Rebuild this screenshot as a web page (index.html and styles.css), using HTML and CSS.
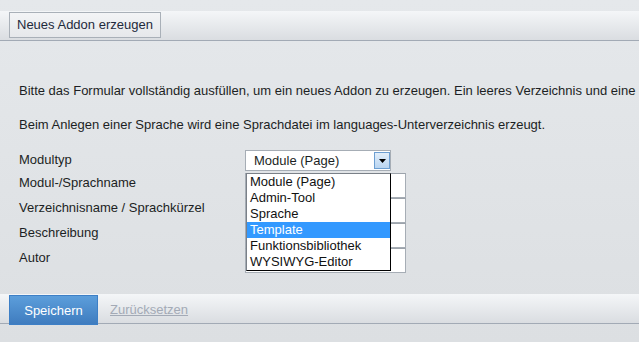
FILE: index.html
```html
<!DOCTYPE html>
<html lang="de">
<head>
  <meta charset="UTF-8">
  <title>Neues Addon erzeugen</title>
  <link rel="stylesheet" href="styles.css">
</head>
<body>

  <div class="bar top-bar">
    <span class="tab">Neues Addon erzeugen</span>
  </div>

  <div class="content">
    <p class="intro">Bitte das Formular vollständig ausfüllen, um ein neues Addon zu erzeugen. Ein leeres Verzeichnis und eine</p>
    <p class="intro">Beim Anlegen einer Sprache wird eine Sprachdatei im languages-Unterverzeichnis erzeugt.</p>

    <div class="form">
      <div class="row row-select">
        <label>Modultyp</label>
        <div class="select">
          <span class="select-value">Module (Page)</span>
          <span class="select-arrow">
            <svg width="7" height="4" viewBox="0 0 7 4"><path d="M0 0h7L3.5 4z" fill="#000"/></svg>
          </span>
          <ul class="select-list">
            <li>Module (Page)</li>
            <li>Admin-Tool</li>
            <li>Sprache</li>
            <li class="active">Template</li>
            <li>Funktionsbibliothek</li>
            <li>WYSIWYG-Editor</li>
          </ul>
        </div>
      </div>
      <div class="row">
        <label>Modul-/Sprachname</label>
        <input type="text">
      </div>
      <div class="row">
        <label>Verzeichnisname / Sprachkürzel</label>
        <input type="text">
      </div>
      <div class="row">
        <label>Beschreibung</label>
        <input type="text">
      </div>
      <div class="row">
        <label>Autor</label>
        <input type="text">
      </div>
    </div>
  </div>

  <div class="bar bottom-bar">
    <button class="save">Speichern</button>
    <a href="#" class="reset">Zurücksetzen</a>
  </div>

</body>
</html>
```

FILE: styles.css
```css
html, body { height: 100%; }
body {
  margin: 0;
  font-family: Arial, "Liberation Sans", sans-serif;
  font-size: 13px;
  color: #1c1f24;
  background: linear-gradient(#e5e8eb, #dcdfe2);
  overflow: hidden;
}

.bar {
  display: flex;
  align-items: flex-start;
  height: 29px;
  padding-left: 9px;
  background: linear-gradient(#f4f6f8, #dadde1);
  border-bottom: 1px solid #a2aab5;
}
.top-bar { margin-top: 11px; }
.tab {
  margin-top: 1px;
  height: 24px;
  line-height: 24px;
  padding: 0 7px;
  border: 1px solid #a9b0b8;
  background: linear-gradient(#f3f4f6, #e6e8eb);
  color: #1e2a3c;
}

.content { padding: 0 19px; }
.intro {
  margin: 0;
  white-space: nowrap;
  line-height: 16px;
}
.intro:first-child { margin-top: 42px; }
.intro + .intro { margin-top: 18px; }

.form { margin-top: 17px; }
.row { display: flex; height: 25px; }
.row-select { height: 23px; }
.row label {
  width: 226px;
  line-height: 16px;
  padding-top: 2px;
}
.row input {
  width: 161px;
  height: 25px;
  margin: 0;
  border: 1px solid #a6adb5;
  border-top-color: #9ca3ab;
  background: #fff;
  box-sizing: border-box;
}

.select {
  position: relative;
  width: 146px;
  height: 21px;
  border: 1px solid #a6adb5;
  background: #fff;
  box-sizing: border-box;
}
.select-value {
  display: block;
  padding-left: 8px;
  line-height: 19px;
}
.select-arrow {
  position: absolute;
  top: 1px;
  right: 0;
  width: 14px;
  height: 15px;
  border: 1px solid #6d9fd2;
  background: linear-gradient(#e2eefa, #b9d5f1);
  display: flex;
  align-items: center;
  justify-content: center;
}
.select-list {
  position: absolute;
  top: 22px;
  left: 0;
  width: 143px;
  margin: 0;
  padding: 0;
  list-style: none;
  background: #fff;
  border: 1px solid #000;
  border-top-color: #7a8088;
  border-left-color: #7a8088;
  z-index: 2;
}
.select-list li {
  height: 16px;
  line-height: 16px;
  padding-left: 3px;
  color: #111;
}
.select-list li.active { background: #3399ff; color: #fff; }

.bottom-bar { margin-top: 21px; }
.save {
  margin-top: 1px;
  height: 30px;
  width: 89px;
  padding: 0;
  font: inherit;
  color: #fff;
  border: 1px solid #3d7fc6;
  background: linear-gradient(#5c9edb, #3f7cbf);
  cursor: pointer;
}
.reset {
  margin: 8px 0 0 12px;
  color: #a3aab6;
  line-height: 16px;
}
```
